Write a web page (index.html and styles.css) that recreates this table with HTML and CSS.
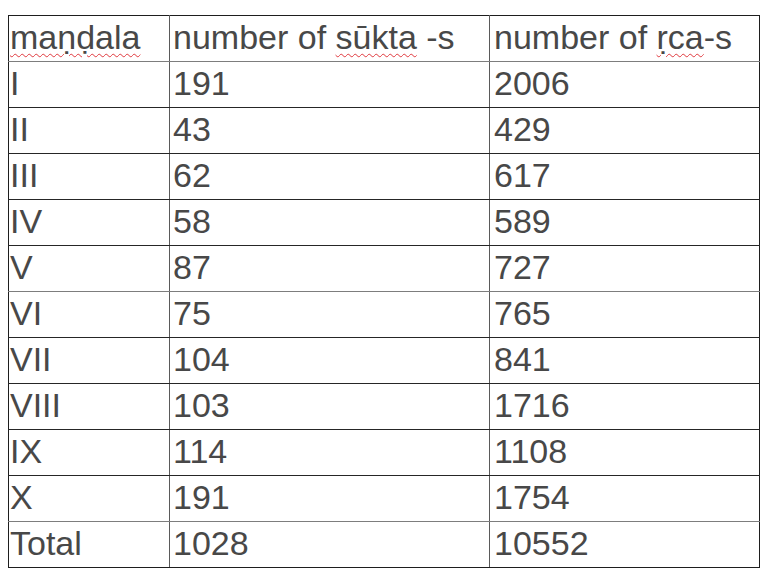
FILE: index.html
```html
<!DOCTYPE html>
<html lang="en">
<head>
<meta charset="utf-8">
<title>Rigveda mandalas</title>
<link rel="stylesheet" href="styles.css">
</head>
<body>
<div class="page">
  <table class="grid">
    <colgroup>
      <col class="c1">
      <col class="c2">
      <col class="c3">
    </colgroup>
    <tr class="head"><td class="k"><span class="sp">maṇḍala</span></td><td>number of <span class="sp">sūkta</span> -s</td><td class="r">number of <span class="sp">ṛca</span>-s</td></tr>
    <tr><td class="k">I</td><td>191</td><td class="r">2006</td></tr>
    <tr><td class="k">II</td><td>43</td><td class="r">429</td></tr>
    <tr><td class="k">III</td><td>62</td><td class="r">617</td></tr>
    <tr><td class="k">IV</td><td>58</td><td class="r">589</td></tr>
    <tr class="soft"><td class="k">V</td><td>87</td><td class="r">727</td></tr>
    <tr><td class="k">VI</td><td>75</td><td class="r">765</td></tr>
    <tr><td class="k">VII</td><td>104</td><td class="r">841</td></tr>
    <tr><td class="k">VIII</td><td>103</td><td class="r">1716</td></tr>
    <tr><td class="k">IX</td><td>114</td><td class="r">1108</td></tr>
    <tr class="soft"><td class="k">X</td><td>191</td><td class="r">1754</td></tr>
    <tr><td class="k">Total</td><td>1028</td><td class="r">10552</td></tr>
  </table>
</div>
</body>
</html>
```
FILE: styles.css
```css
html, body {
  margin: 0;
  background: #ffffff;
}
.page {
  padding: 15px 8px 0 8px;
}
.grid {
  border-collapse: collapse;
  table-layout: fixed;
  width: 751px;
  border: 1px solid #1e1e1e;
  font-family: "Liberation Sans", Arial, "DejaVu Sans", sans-serif;
  font-size: 34px;
  color: #484848;
}
.c1 { width: 161px; }
.c2 { width: 320px; }
.c3 { width: 270px; }
.grid td {
  border-top: 1px solid #262626;
  border-bottom: 1px solid #262626;
  border-left: 1px solid #5a5a5a;
  border-right: 1px solid #5a5a5a;
  padding: 2px 2px 5px 3px;
  line-height: 38px;
  height: 38px;
  vertical-align: top;
  white-space: nowrap;
  overflow: hidden;
}
.grid td.k {
  padding-left: 1px;
  border-left: 1px solid #1e1e1e;
}
.grid td.r {
  padding-left: 4px;
  border-right: 1px solid #1e1e1e;
}
.grid tr.head td {
  border-top: 1px solid #1e1e1e;
  border-bottom: 1px solid #7d7d7d;
}
.grid tr.soft td {
  border-bottom: 1px solid #7d7d7d;
}
.grid tr:last-child td {
  border-bottom: 1px solid #1e1e1e;
}
.sp {
  text-decoration: underline wavy #e0393e;
  text-decoration-thickness: 1px;
  text-underline-offset: 4px;
}
```
